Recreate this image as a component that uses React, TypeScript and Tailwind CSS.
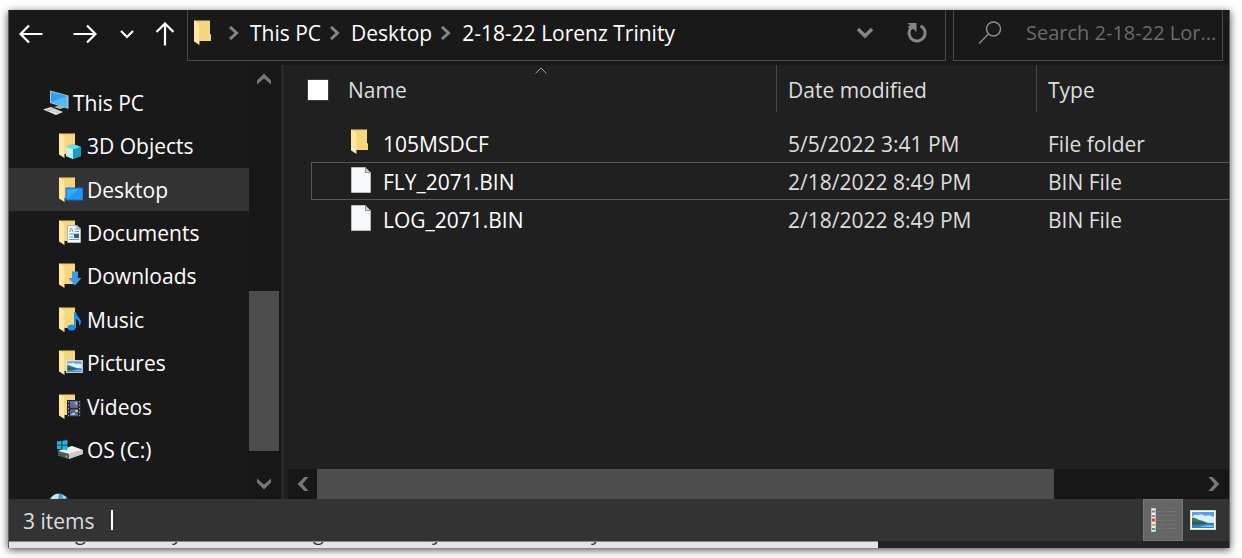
import type { ReactNode } from "react";

type IconKind =
  | "pc" | "objects" | "desktop" | "documents" | "downloads"
  | "music" | "pictures" | "videos" | "drive";

const places: { label: string; icon: IconKind; selected?: boolean }[] = [
  { label: "This PC", icon: "pc" },
  { label: "3D Objects", icon: "objects" },
  { label: "Desktop", icon: "desktop", selected: true },
  { label: "Documents", icon: "documents" },
  { label: "Downloads", icon: "downloads" },
  { label: "Music", icon: "music" },
  { label: "Pictures", icon: "pictures" },
  { label: "Videos", icon: "videos" },
  { label: "OS (C:)", icon: "drive" },
];

const files = [
  { name: "105MSDCF", date: "5/5/2022 3:41 PM", type: "File folder", folder: true },
  { name: "FLY_2071.BIN", date: "2/18/2022 8:49 PM", type: "BIN File", focused: true },
  { name: "LOG_2071.BIN", date: "2/18/2022 8:49 PM", type: "BIN File" },
];

function FolderShape() {
  return (
    <g>
      <path d="M0 0.5H16V14L17 15V21H5.5Z" fill="#f3cf70" />
      <path d="M5.5 3L16 1V14L17 15V21H5.5Z" fill="#f7d77e" />
      <path d="M0 0.5L5.5 3.2V25L0 21.5Z" fill="#ffe8a2" />
    </g>
  );
}

function FolderIcon() {
  return (
    <svg width="18" height="26" viewBox="0 0 18 26" aria-hidden="true">
      <FolderShape />
    </svg>
  );
}

function FileIcon() {
  return (
    <svg width="20" height="26" viewBox="0 0 20 26" aria-hidden="true">
      <path d="M0.5 0.5H14.5L19.5 5.5V25.5H0.5Z" fill="#f7f8f9" stroke="#b9bbbd" />
      <path d="M14.5 0.5V5.5H19.5Z" fill="#d5d8da" stroke="#8d8f91" />
    </svg>
  );
}

function Landscape() {
  return (
    <g>
      <rect x="0.5" y="0.5" width="25" height="19" fill="#fff" stroke="#d8d8d8" />
      <rect x="2" y="2" width="22" height="16" fill="#5b9bf5" />
      <path d="M2 7Q4 4 8 5Q11 3 15 6Q19 4 24 7V13H2Z" fill="#dceffc" />
      <path d="M2 7.500Q5 7.500 8 9.500L13 11L18 13L24 13.500H2Z" fill="#3c7453" />
      <path d="M2 12Q8 12.500 24 13V18H2Z" fill="#2f7fc4" />
      <path d="M2 11.500L14 12.500L18 13.500L9 14.500L2 15Z" fill="#2d5f52" />
      <path d="M8 17L18 15L24 15.500V17Z" fill="#7dbbe6" />
    </g>
  );
}

const overlays: Record<string, ReactNode> = {
  objects: (
    <g>
      <path d="M7 14L14 11L22 14V23L14 26L7 23Z" fill="#25bcd3" />
      <path d="M7 14L14 11L22 14L14 16.500Z" fill="#70dfea" />
      <path d="M7 14L14 16.500V26L7 23Z" fill="#c4f3f2" />
      <path d="M14 16.500L22 14V23L14 26Z" fill="#139fc6" />
    </g>
  ),
  desktop: (
    <g>
      <rect x="7" y="11" width="17" height="12" fill="#1c96fb" stroke="#1274c9" />
      <path d="M8 22L20 12H8Z" fill="#38a9ff" />
    </g>
  ),
  documents: (
    <g>
      <path d="M8.500 5.500H18L21.500 9V22.500H8.500Z" fill="#f6f8fb" stroke="#aeb4bb" />
      <path d="M18 5.500V9H21.500" fill="none" stroke="#8e959c" />
      <path d="M10.500 12L12.500 8L14 12M16 9H18M16 11.500H20M10 14H20M10 17H14M10 19.500H20" fill="none" stroke="#5f9fd3" />
      <rect x="15" y="14" width="5" height="4" fill="#315f97" />
    </g>
  ),
  downloads: <path d="M13 8.500H19V15H22.500L16 22.500L9.500 15H13Z" fill="#3f97e8" />,
  music: (
    <g>
      <ellipse cx="12.500" cy="20.500" rx="4" ry="3" fill="#1494f3" />
      <path d="M15 21V5H17Q17 8 20 11Q24 15 20 19Q21 13 16.800 12V21Z" fill="#1494f3" />
    </g>
  ),
  pictures: (
    <g transform="translate(7 10) scale(.65)">
      <Landscape />
    </g>
  ),
  videos: (
    <g>
      <rect x="8" y="6" width="14" height="17" fill="#252729" />
      <rect x="11" y="7" width="8" height="7" fill="#367bd8" />
      <rect x="11" y="15" width="8" height="7" fill="#2f67bd" />
      <path d="M11 12L14 11L16 13H19V14H11Z" fill="#d43c2e" />
      <path d="M15 9L18 8V11Z M11 21L15 18L17 21Z M16 16H19V18H16Z" fill="#e5c13c" />
      <path d="M9.500 7V22M20.500 7V22" stroke="#9da2a8" strokeDasharray="1.500 2" />
    </g>
  ),
};

function PlaceIcon({ kind }: { kind: IconKind }) {
  if (kind === "pc") {
    return (
      <svg width="26" height="26" viewBox="0 0 26 26" aria-hidden="true">
        <path d="M7 0.500L25.500 5.500V19L7 13Z" fill="#a9c4d6" />
        <path d="M8 2L24 6V17.500L8 12Z" fill="#2e9cf0" />
        <path d="M8 12L24 6V17.500Z" fill="#53b8fb" />
        <path d="M11 17L16 15.500L22 17.500L17 19Z" fill="#aeb5ba" />
        <path d="M0 19.500L8 17L20 22L13 25Z" fill="#e4e7e9" />
        <path d="M4 19.500L16 23M8 18L17 22M3 21L11 18" stroke="#a5aaad" strokeWidth=".7" />
      </svg>
    );
  }
  if (kind === "drive") {
    return (
      <svg width="26" height="20" viewBox="0 0 26 20" aria-hidden="true">
        <path d="M1 11L15 6L26 10V14L12 19L1 15Z" fill="#8d9091" />
        <path d="M1 11L15 6L26 10L12 14Z" fill="#edeeee" />
        <path d="M1 11L12 14V19L1 15.500Z" fill="#55585a" />
        <path d="M12 14L26 10V14L12 19Z" fill="#c9cccd" />
        <circle cx="9.500" cy="16.500" r="1" fill="#4ed94a" />
        <path d="M0 1.500L4.500 1V4.800H0ZM5.300 .8L10.500 0V4.800H5.300ZM0 5.600H4.500V9.500L0 9ZM5.300 5.600H10.500V10.300L5.300 9.600Z" fill="#19b5ee" />
      </svg>
    );
  }
  return (
    <svg width="24" height="26" viewBox="0 0 24 26" aria-hidden="true">
      <FolderShape />
      {overlays[kind]}
    </svg>
  );
}

function Chevron() {
  return (
    <svg width="12" height="14" viewBox="0 0 12 14" className="shrink-0" aria-hidden="true">
      <path d="M2 1L8.500 7L2 13" fill="none" stroke="#858585" strokeWidth="3" />
    </svg>
  );
}

function ScrollArrow({ turn = "" }: { turn?: string }) {
  return (
    <svg width="14" height="14" viewBox="0 0 14 14" className={`shrink-0 ${turn}`} aria-hidden="true">
      <path d="M1.500 0H5.500L12.500 7L5.500 14H1.500L7.500 7Z" fill="#777777" />
    </svg>
  );
}

const navButton = "flex items-center justify-center";

function Toolbar() {
  return (
    <header className="flex h-[55px] shrink-0 bg-[#191919] pr-1.5 pb-1">
      <nav aria-label="History" className="flex w-[178px] shrink-0 items-center pb-1 pl-2">
        <button aria-label="Back" className={`${navButton} w-7`}>
          <svg width="24" height="20" viewBox="0 0 24 20" fill="none" stroke="#fff" strokeWidth="2.200" aria-hidden="true">
            <path d="M23.500 10H1.500M10 1.500L1.500 10L10 18.500" />
          </svg>
        </button>
        <button aria-label="Forward" className={`${navButton} ml-[26px] w-7`}>
          <svg width="24" height="20" viewBox="0 0 24 20" fill="none" stroke="#fff" strokeWidth="2.200" aria-hidden="true">
            <path d="M0.500 10H22.500M14 1.500L22.500 10L14 18.500" />
          </svg>
        </button>
        <button aria-label="Recent locations" className={`${navButton} ml-4 w-6`}>
          <svg width="14" height="10" viewBox="0 0 14 10" fill="none" stroke="#fff" strokeWidth="2.200" aria-hidden="true">
            <path d="M1 2L7 8L13 2" />
          </svg>
        </button>
        <button aria-label="Up" className={`${navButton} ml-[14px] w-6`}>
          <svg width="20" height="24" viewBox="0 0 20 24" fill="none" stroke="#fff" strokeWidth="2.200" aria-hidden="true">
            <path d="M10 23.500V1.500M1.500 10L10 1.500L18.500 10" />
          </svg>
        </button>
      </nav>
      <nav aria-label="Address" className="flex min-w-0 flex-1 items-center border-x border-b border-[#484848] pb-1 pl-1.5">
        <FolderIcon />
        <span className="w-4" />
        <Chevron />
        <a href="#this-pc" className="pr-2 pl-2.5">This PC</a>
        <Chevron />
        <a href="#desktop" className="pr-2 pl-2.5">Desktop</a>
        <Chevron />
        <a href="#trinity" className="pl-2.5 whitespace-nowrap">2-18-22 Lorenz Trinity</a>
        <button aria-label="Previous locations" className={`${navButton} ml-auto w-12`}>
          <svg width="18" height="14" viewBox="0 0 18 14" fill="none" stroke="#858585" strokeWidth="3.400" aria-hidden="true">
            <path d="M2 3L9 10L16 3" />
          </svg>
        </button>
        <button aria-label="Refresh" className={`${navButton} w-[56px]`}>
          <svg width="20" height="22" viewBox="0 0 20 22" fill="none" aria-hidden="true">
            <path d="M13.500 3.800A8 8 0 1 1 3.500 6.500" stroke="#858585" strokeWidth="3" />
            <path d="M0.500 1H9.500V10L6.500 7L3.500 8L0.500 4H3.500Z" fill="#858585" />
          </svg>
        </button>
      </nav>
      <label className="ml-[7px] flex w-[270px] shrink-0 items-center border-x border-b border-[#484848] pb-1 pl-6">
        <svg width="24" height="24" viewBox="0 0 24 24" fill="none" stroke="#8c8c8c" strokeWidth="1.500" className="shrink-0" aria-hidden="true">
          <circle cx="15.500" cy="8" r="7" />
          <path d="M10.500 13L1 22.500" />
        </svg>
        <input
          type="text"
          aria-label="Search folder"
          placeholder="Search 2-18-22 Lor..."
          className="ml-6 w-full min-w-0 bg-transparent text-xl outline-none placeholder:text-[#6b6b6b]"
        />
      </label>
    </header>
  );
}

function Sidebar() {
  return (
    <aside className="flex w-[275px] shrink-0 border-r-3 border-[#292929] bg-[#191919]">
      <div className="flex min-w-0 flex-1 flex-col overflow-hidden pt-4">
        <ul className="flex flex-1 flex-col">
          {places.map((place) => (
            <li key={place.label} className={`flex flex-1 ${place.selected ? "bg-[#333333]" : ""}`}>
              <a
                href={`#${place.icon}`}
                className={`flex flex-1 items-center gap-1 ${place.icon === "pc" ? "pl-[34px]" : place.icon === "drive" ? "pl-12" : "pl-[50px]"}`}
              >
                <PlaceIcon kind={place.icon} />
                <span>{place.label}</span>
              </a>
            </li>
          ))}
        </ul>
        <div className="flex h-[27px] items-end overflow-hidden pl-10">
          <svg width="20" height="6" viewBox="0 0 20 6" aria-hidden="true">
            <circle cx="10" cy="10" r="9.500" fill="#4b9fc5" />
            <path d="M2 5Q6 0 10 1L9 6H1ZM13 2L17 4L15 6Z" fill="#c7e6ef" />
          </svg>
        </div>
      </div>
      <div className="flex w-8 shrink-0 flex-col bg-[#171717] pr-0.5">
        <button aria-label="Scroll up" className="flex h-7 items-center justify-center">
          <ScrollArrow turn="-rotate-90" />
        </button>
        <div className="flex-[198]" />
        <div className="flex-[160] bg-[#4d4d4d]" />
        <div className="flex-[18]" />
        <button aria-label="Scroll down" className="flex h-[30px] items-center justify-center">
          <ScrollArrow turn="rotate-90" />
        </button>
      </div>
    </aside>
  );
}

function FileList() {
  return (
    <section className="flex min-w-0 flex-1 flex-col bg-[#202020]">
      <table className="w-full table-fixed border-separate border-spacing-0 text-left text-[#dedede]">
        <colgroup>
          <col className="w-[493px]" />
          <col className="w-[260px]" />
          <col />
        </colgroup>
        <thead>
          <tr className="h-[47px]">
            <th className="relative border-r border-[#484848] p-0 font-normal">
              <svg width="12" height="7" viewBox="0 0 12 7" fill="none" stroke="#a5a5a5" className="absolute top-0.5 left-[251px]" aria-hidden="true">
                <path d="M0.500 6.500L6 1L11.500 6.500" />
              </svg>
              <div className="flex items-center gap-[19px] pt-0.5 pl-[23px]">
                <input type="checkbox" aria-label="Select all" className="size-[22px] appearance-none border border-[#3c3c3c] bg-white" />
                <button>Name</button>
              </div>
            </th>
            <th className="border-r border-[#484848] p-0 pt-0.5 pl-[11px] font-normal">
              <button>Date modified</button>
            </th>
            <th className="p-0 pt-0.5 pl-[11px] font-normal">
              <button>Type</button>
            </th>
          </tr>
          <tr className="h-3" aria-hidden="true"><td colSpan={3} className="p-0" /></tr>
        </thead>
        <tbody>
          {files.map((file) => {
            const line = file.focused ? "border-[#585858]" : "border-transparent";
            return (
              <tr key={file.name} className="whitespace-nowrap">
                <td className="p-0 pl-[27px]">
                  <div className={`flex h-[38px] items-center border-y border-l pl-[39px] text-white ${line}`}>
                    <span className="flex h-7 w-8 shrink-0 items-start">{file.folder ? <FolderIcon /> : <FileIcon />}</span>
                    <span className="pt-0.5">{file.name}</span>
                  </div>
                </td>
                <td className={`border-y p-0 pt-0.5 pl-[11px] ${line}`}>{file.date}</td>
                <td className={`border-y p-0 pt-0.5 pl-[11px] ${line}`}>{file.type}</td>
              </tr>
            );
          })}
        </tbody>
      </table>
      <div className="mt-auto ml-1 flex h-[30px] bg-[#171717]">
        <button aria-label="Scroll left" className="flex w-[29px] items-center justify-center">
          <ScrollArrow turn="rotate-180" />
        </button>
        <div className="flex-[737] bg-[#4d4d4d]" />
        <div className="flex-[145]" />
        <button aria-label="Scroll right" className="flex w-[30px] items-center justify-center">
          <ScrollArrow />
        </button>
      </div>
    </section>
  );
}

function StatusBar() {
  return (
    <footer className="flex h-[42px] shrink-0 items-center bg-[#333333] pl-3.5 text-[#dedede]">
      <span className="pt-0.5">3 items</span>
      <span className="ml-4 h-5 w-0.5 bg-white" />
      <button aria-label="Details view" className={`${navButton} ml-auto h-full w-10 border border-[#777777] bg-[#666666]`}>
        <svg width="26" height="24" viewBox="0 0 26 24" aria-hidden="true">
          <rect x="1.500" y="0.500" width="4" height="23" fill="#f3f3f3" stroke="#c9c1b4" />
          <path d="M2 3.500H5" stroke="#4a89c8" strokeWidth="2" />
          <path d="M2 8H5" stroke="#8b84b5" strokeWidth="2" />
          <path d="M2 12H5" stroke="#e13b22" strokeWidth="3" />
          <path d="M2 17H5" stroke="#a9b558" strokeWidth="2" />
          <path d="M2 21H5" stroke="#3e9a9b" strokeWidth="2" />
          <path d="M7 3.500H15M17 3.500H26M7 7.500H15M17 7.500H26M7 12.500H15M17 12.500H26M7 16.500H15M17 16.500H26M7 20.500H15M17 20.500H26" stroke="#747474" />
        </svg>
      </button>
      <button aria-label="Large icons view" className={`${navButton} h-full w-10`}>
        <svg width="26" height="20" viewBox="0 0 26 20" aria-hidden="true"><Landscape /></svg>
      </button>
      <span className="w-1.5" />
    </footer>
  );
}

function PageBehind() {
  return (
    <div className="flex h-[7px] shrink-0 overflow-hidden bg-[#232323]" aria-hidden="true">
      <div className="grid w-[869px] grid-cols-[97px_141px_119px_159px_auto] content-end overflow-hidden border-t border-[#8a8a8a] bg-[#e4e4e4] pl-[66px] text-xl leading-[30px] text-[#333333]">
        <span>g</span>
        <span>y</span>
        <span>g</span>
        <span>y</span>
        <span>y</span>
      </div>
    </div>
  );
}

export default function App() {
  return (
    <div className="flex h-screen bg-white pt-2.5 pr-3 pb-2.5 pl-2 font-['Open_Sans','Noto_Sans',sans-serif] text-[21px] leading-7 text-white">
      <main className="flex min-w-0 flex-1 flex-col border-x border-[#5a5a5a] shadow-[0_2px_8px_rgba(0,0,0,0.7)]">
        <Toolbar />
        <div className="flex min-h-0 flex-1">
          <Sidebar />
          <FileList />
        </div>
        <StatusBar />
        <PageBehind />
      </main>
    </div>
  );
}
